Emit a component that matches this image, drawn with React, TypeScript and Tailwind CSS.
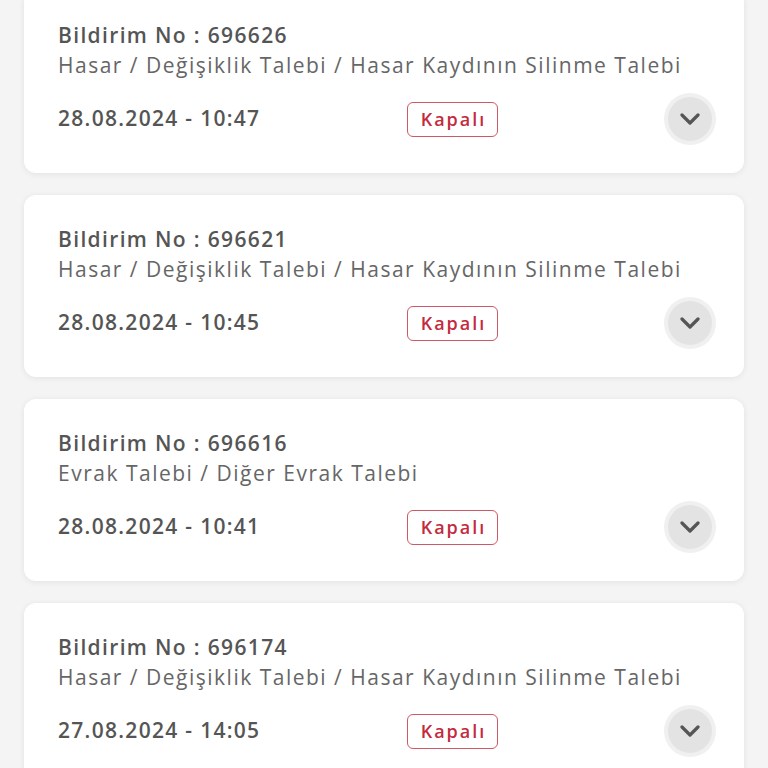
import React from "react";

type Notice = {
  no: string;
  path: string;
  date: string;
  status: string;
};

const notices: Notice[] = [
  {
    no: "696626",
    path: "Hasar / Değişiklik Talebi / Hasar Kaydının Silinme Talebi",
    date: "28.08.2024 - 10:47",
    status: "Kapalı",
  },
  {
    no: "696621",
    path: "Hasar / Değişiklik Talebi / Hasar Kaydının Silinme Talebi",
    date: "28.08.2024 - 10:45",
    status: "Kapalı",
  },
  {
    no: "696616",
    path: "Evrak Talebi / Diğer Evrak Talebi",
    date: "28.08.2024 - 10:41",
    status: "Kapalı",
  },
  {
    no: "696174",
    path: "Hasar / Değişiklik Talebi / Hasar Kaydının Silinme Talebi",
    date: "27.08.2024 - 14:05",
    status: "Kapalı",
  },
];

function Chevron() {
  return (
    <svg width="20" height="12" viewBox="0 0 20 12" fill="none">
      <path
        d="M2 2l8 8 8-8"
        stroke="#555"
        strokeWidth="3.2"
        strokeLinecap="round"
        strokeLinejoin="round"
      />
    </svg>
  );
}

function NoticeCard({ notice }: { notice: Notice }) {
  return (
    <div className="h-[182px] rounded-[12px] bg-white pl-[34px] pr-[28px] pt-[29px] shadow-[0_1px_6px_rgba(0,0,0,0.08)]">
      <div className="text-[21px] font-semibold leading-[30px] tracking-[1.35px] text-[#555]">
        Bildirim No : {notice.no}
      </div>
      <div className="text-[21px] leading-[30px] tracking-[1.5px] text-[#666]">
        {notice.path}
      </div>
      <div className="mt-[13px] flex items-center">
        <div className="w-[349px] text-[21px] font-semibold tracking-[1.3px] text-[#555]">
          {notice.date}
        </div>
        <span className="flex h-[35px] w-[91px] items-center justify-center rounded-[6px] border-[1.5px] border-[#cf5866] pl-[2px] text-[18px] font-semibold tracking-[2px] text-[#c42a3d]">
          {notice.status}
        </span>
        <button className="ml-auto flex h-[52px] w-[52px] items-center justify-center rounded-full bg-[#f0f0f0]">
          <span className="flex h-[44px] w-[44px] items-center justify-center rounded-full bg-[#e3e3e3]">
            <Chevron />
          </span>
        </button>
      </div>
    </div>
  );
}

export default function App() {
  return (
    <div
      className="min-h-[768px] overflow-hidden bg-[#f4f4f4] px-[24px]"
      style={{ fontFamily: '"Open Sans", sans-serif' }}
    >
      <div className="-mt-[9px] flex flex-col gap-[22px]">
        {notices.map((n) => (
          <NoticeCard key={n.no} notice={n} />
        ))}
      </div>
    </div>
  );
}
